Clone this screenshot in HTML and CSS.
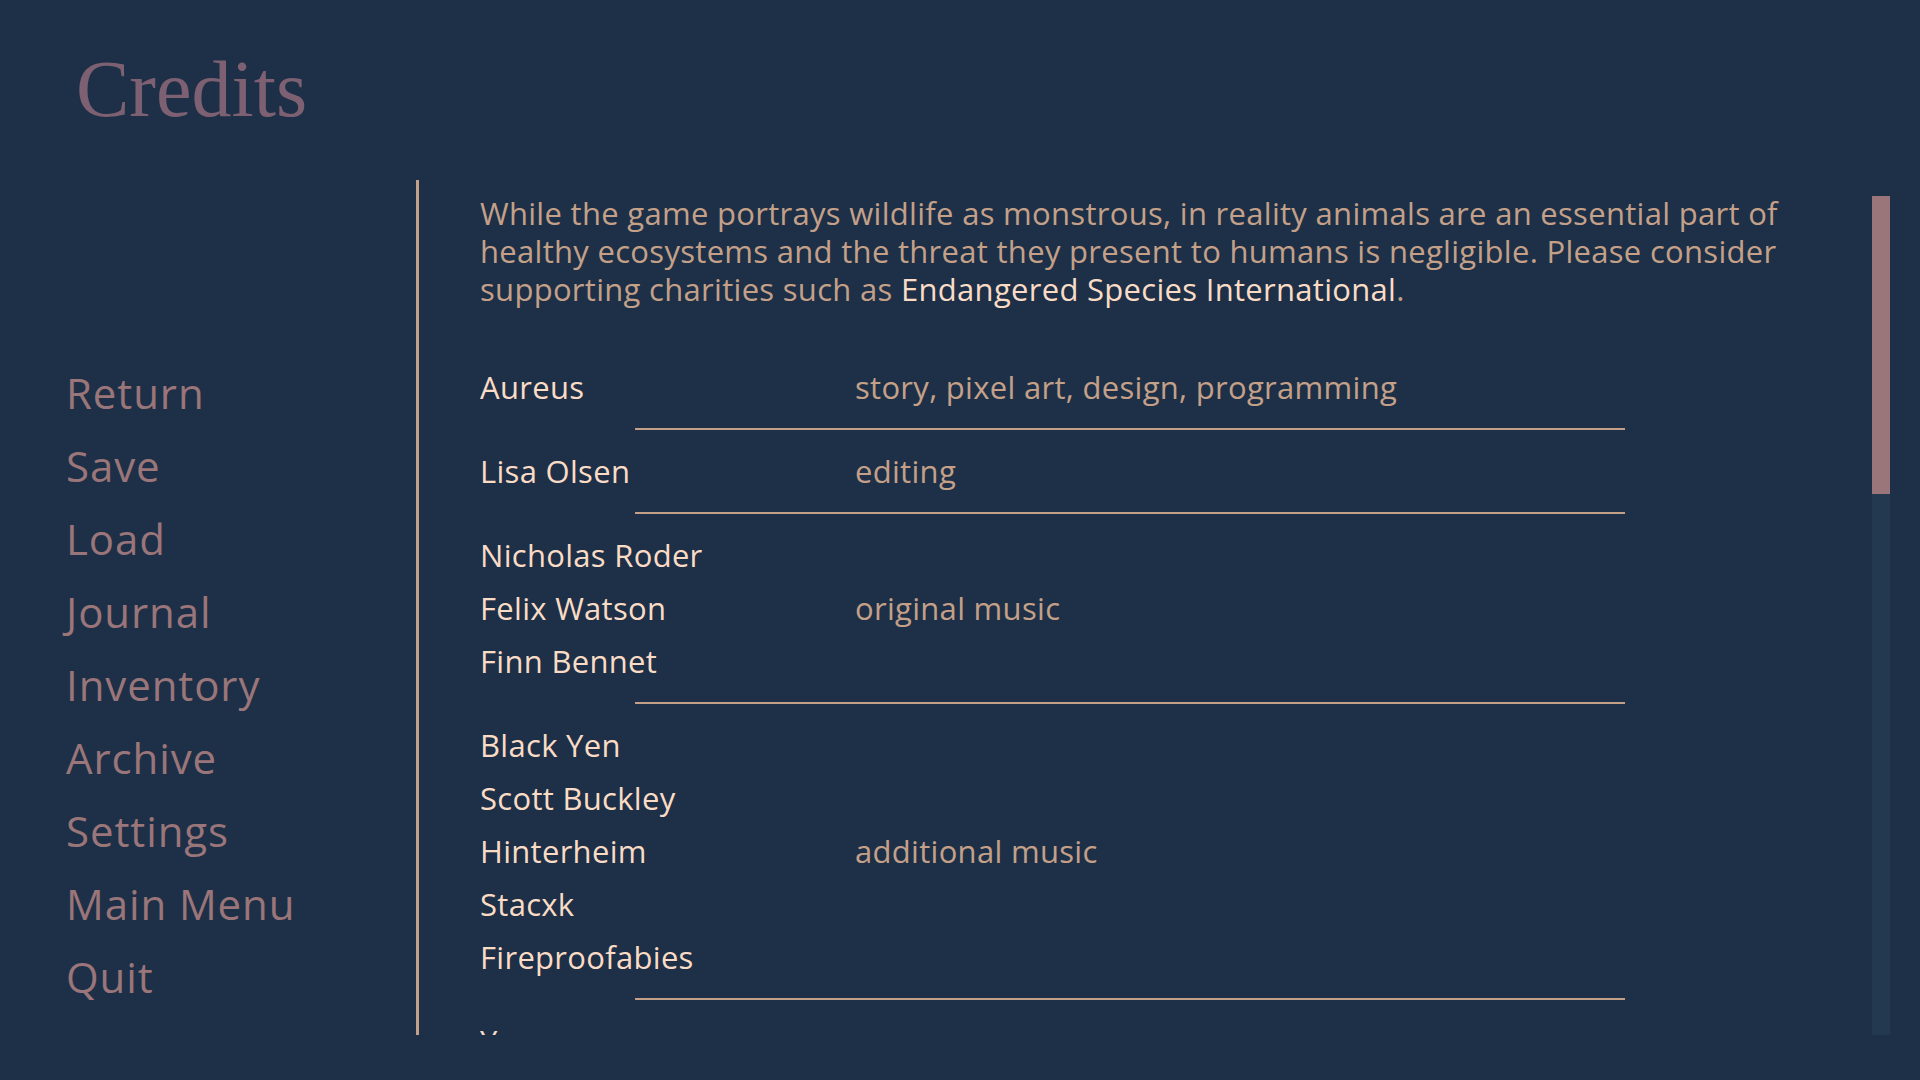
FILE: index.html
```html
<!DOCTYPE html>
<html lang="en">
<head>
  <meta charset="UTF-8">
  <meta name="viewport" content="width=device-width, initial-scale=1.0">
  <title>Credits</title>
  <link rel="stylesheet" href="styles.css">
</head>
<body>

  <div class="screen">
    <div class="title-bar">
      <h1>Credits</h1>
    </div>

    <div class="main">
      <nav class="menu">
        <a href="#">Return</a>
        <a href="#">Save</a>
        <a href="#">Load</a>
        <a href="#">Journal</a>
        <a href="#">Inventory</a>
        <a href="#">Archive</a>
        <a href="#">Settings</a>
        <a href="#">Main Menu</a>
        <a href="#">Quit</a>
      </nav>

      <div class="panel">
        <div class="scroller">
          <div class="credits">
            <p class="intro">While the game portrays wildlife as monstrous, in reality animals are an essential part of healthy ecosystems and the threat they present to humans is negligible. Please consider supporting charities such as <span class="hl">Endangered Species International</span>.</p>

            <div class="credit">
              <div class="names"><div>Aureus</div></div>
              <div class="role">story, pixel art, design, programming</div>
            </div>
            <div class="sep"></div>

            <div class="credit">
              <div class="names"><div>Lisa Olsen</div></div>
              <div class="role">editing</div>
            </div>
            <div class="sep"></div>

            <div class="credit">
              <div class="names">
                <div>Nicholas Roder</div>
                <div>Felix Watson</div>
                <div>Finn Bennet</div>
              </div>
              <div class="role">original music</div>
            </div>
            <div class="sep"></div>

            <div class="credit">
              <div class="names">
                <div>Black Yen</div>
                <div>Scott Buckley</div>
                <div>Hinterheim</div>
                <div>Stacxk</div>
                <div>Fireproofabies</div>
              </div>
              <div class="role">additional music</div>
            </div>
            <div class="sep"></div>

            <div class="credit">
              <div class="names"><div>You</div></div>
              <div class="role"></div>
            </div>
          </div>
        </div>

        <div class="scrollbar">
          <div class="thumb"></div>
        </div>
      </div>
    </div>
  </div>

</body>
</html>
```

FILE: styles.css
```css
body {
  margin: 0;
  background-color: #1d3047;
  font-family: "Open Sans", Lato, sans-serif;
}

.screen {
  width: 1920px;
  height: 1080px;
  overflow: hidden;
}

.title-bar {
  height: 180px;
  padding-left: 76px;
  box-sizing: border-box;
}

.title-bar h1 {
  margin: 0;
  padding-top: 49px;
  font-family: "Liberation Serif", serif;
  font-weight: normal;
  font-size: 80px;
  line-height: 80px;
  color: #7d6072;
}

.main {
  display: flex;
  height: 855px;
}

/* left menu */
.menu {
  width: 416px;
  box-sizing: border-box;
  padding: 0 0 22px 66px;
  display: flex;
  flex-direction: column;
  justify-content: flex-end;
}

.menu a {
  font-size: 42px;
  line-height: 73px;
  letter-spacing: 0.9px;
  color: #9a7579;
  text-decoration: none;
}

/* right panel */
.panel {
  flex: 1;
  display: flex;
  border-left: 3px solid #c4a089;
}

.scroller {
  flex: 1;
  overflow: hidden;
  padding: 14px 0 0 61px;
}

.credits {
  width: 1300px;
  letter-spacing: 0.3px;
}

.intro {
  margin: 0 0 38px;
  width: 1320px;
  font-size: 31px;
  line-height: 38px;
  color: #c4a089;
}

.intro .hl { color: #fadcc6; }

.credit {
  display: flex;
  align-items: center;
  padding: 14.5px 0;
  font-size: 31px;
  line-height: 53px;
}

.names {
  width: 375px;
  color: #fadcc6;
}

.role { color: #c4a089; }

.sep {
  width: 990px;
  height: 2px;
  margin: 0 auto;
  background-color: #c4a089;
}

.scrollbar {
  width: 18px;
  margin: 16px 30px 0 0;
  background-color: #233950;
}

.thumb {
  height: 298px;
  background-color: #9a7579;
}
```
